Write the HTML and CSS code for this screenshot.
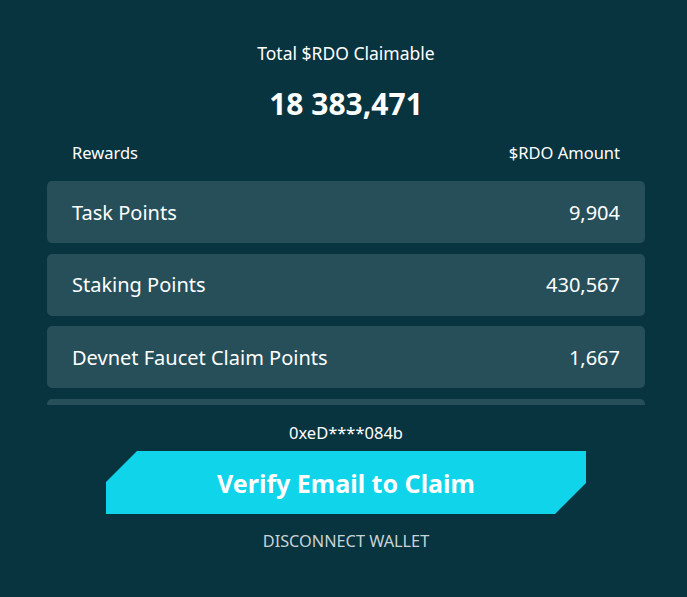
FILE: index.html
```html
<html>
<head>
<title>Claim $RDO</title>
<link rel="stylesheet" href="styles.css">
</head>
<body>
<div class="claim">
  <div class="total-label">Total $RDO Claimable</div>
  <div class="total-value">18 383,471</div>

  <div class="list-head">
    <span>Rewards</span>
    <span>$RDO Amount</span>
  </div>

  <div class="list">
    <div class="row"><span>Task Points</span><span>9,904</span></div>
    <div class="row"><span>Staking Points</span><span>430,567</span></div>
    <div class="row"><span>Devnet Faucet Claim Points</span><span>1,667</span></div>
    <div class="row"><span>Referral Points</span><span>0</span></div>
  </div>

  <div class="wallet">0xeD****084b</div>
  <button class="claim-btn">Verify Email to Claim</button>
  <div class="disconnect">DISCONNECT WALLET</div>
</div>
</body>
</html>
```

FILE: styles.css
```css
body { margin:0; padding-left:5px; background-color:#07343f; font-family:"Noto Sans", "Open Sans", sans-serif; color:#ffffff; }
.claim { width:598px; margin:0 auto; padding-top:41px; display:flex; flex-direction:column; align-items:center; }
.total-label { font-size:17.5px; line-height:24px; }
.total-value { font-size:30px; font-weight:700; line-height:40px; margin-top:19px; }
.list-head { align-self:stretch; display:flex; justify-content:space-between; padding:0 25px; margin-top:17px; font-size:16.5px; line-height:24px; }
.list { align-self:stretch; height:224px; overflow:hidden; margin-top:16px; display:flex; flex-direction:column; gap:10.5px; }
.row { flex:none; height:62px; display:flex; justify-content:space-between; align-items:center; padding:0 25px; background-color:#264f5a; border-radius:5px; font-size:20px; }
.wallet { font-size:16.5px; line-height:24px; margin-top:16px; }
.claim-btn { width:480px; height:63px; margin-top:6px; border:none; background-color:#0fd4ea; color:#ffffff; font-family:inherit; font-size:25px; font-weight:700; clip-path:polygon(31px 0, 100% 0, 100% 32px, 449px 100%, 0 100%, 0 31px); cursor:pointer; }
.disconnect { font-size:16.3px; line-height:24px; margin-top:15px; color:#c9d3d6; }
```
